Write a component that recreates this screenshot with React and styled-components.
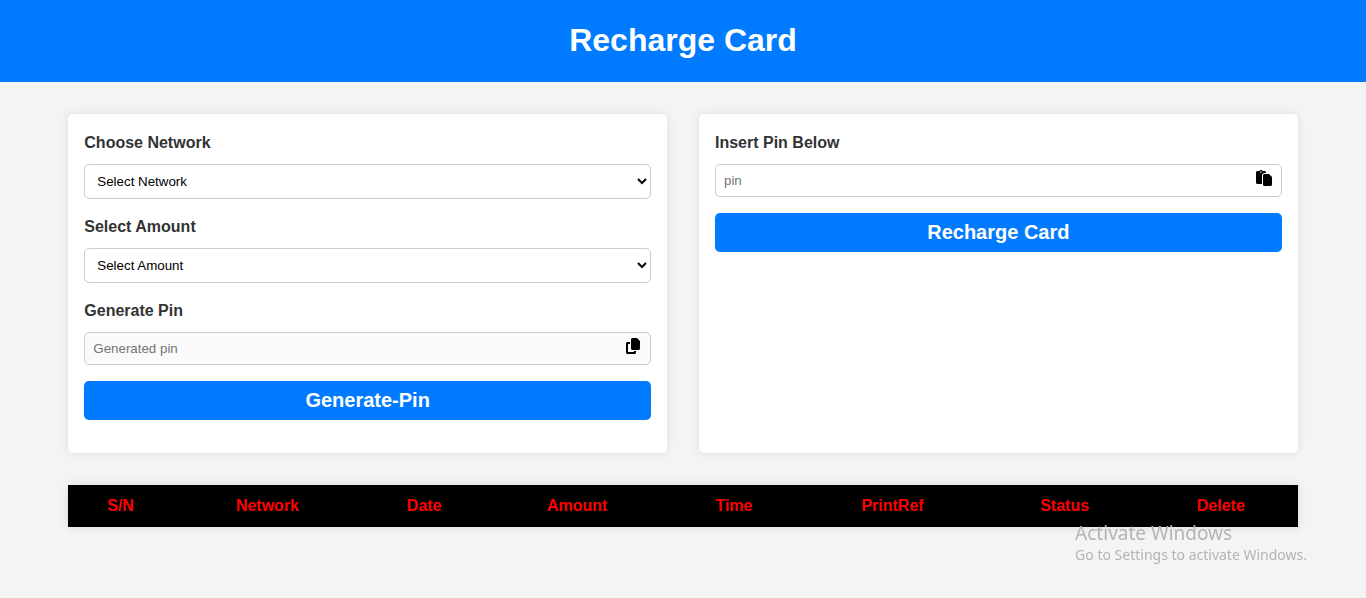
import React from "react";
import styled, { createGlobalStyle } from "styled-components";
import { FaCopy, FaPaste } from "react-icons/fa6";

const GlobalStyle = createGlobalStyle`
  *, *::before, *::after { box-sizing: border-box; }
  body {
    margin: 0;
    background: #f4f4f4;
    color: #333;
    font-family: Arial, "Liberation Sans", sans-serif;
    font-size: 16px;
    line-height: 26px;
  }
`;

const Header = styled.header`
  padding: 16px 16px 18px;
  background: #007bff;
  text-align: center;
`;

const Title = styled.h1`
  margin: 0;
  color: #fff;
  font-size: 32px;
  line-height: 48px;
`;

const Main = styled.main`
  display: grid;
  gap: 32px;
  width: 90%;
  margin: 32px auto;
`;

const Panels = styled.div`
  display: grid;
  grid-template-columns: repeat(2, minmax(0, 1fr));
  gap: 32px;
`;

const Card = styled.form`
  padding: 16px 16px 33px;
  background: #fff;
  border-radius: 5px;
  box-shadow: 0 0 10px rgba(0, 0, 0, 0.1);
`;

const Label = styled.label`
  display: block;
  margin-bottom: 8px;
  font-weight: bold;
  line-height: 26px;
`;

const Select = styled.select`
  display: block;
  width: 100%;
  height: 35px;
  margin-bottom: 15px;
  padding: 8px;
  border: 1px solid #ccc;
  border-radius: 5px;
  background: #fff;
  color: #000;
  font-family: inherit;
`;

const InputWrap = styled.div`
  position: relative;
  margin-bottom: 16px;
`;

const Input = styled.input`
  display: block;
  width: 100%;
  height: 33px;
  padding: 8px 40px 8px 8px;
  border: 1px solid #ccc;
  border-radius: 5px;
  background: ${(p) => (p.readOnly ? "#fafafa" : "#fff")};
  font-family: inherit;

  &::placeholder { color: #757575; }
`;

const IconButton = styled.button`
  position: absolute;
  top: 6px;
  right: 10px;
  display: flex;
  padding: 0;
  border: 0;
  background: none;
  color: #000;
  font-size: 16px;
  cursor: pointer;
`;

const SubmitButton = styled.button`
  display: block;
  width: 100%;
  height: 39px;
  padding: 0 8px;
  border: 0;
  border-radius: 5px;
  background: #007bff;
  color: #fff;
  font-family: inherit;
  font-size: 20px;
  font-weight: bold;
  cursor: pointer;
`;

const Table = styled.table`
  width: 100%;
  table-layout: fixed;
  border-collapse: collapse;
  background: #000;
  box-shadow: 0 0 10px rgba(0, 0, 0, 0.1);
`;

const HeadCell = styled.th`
  width: ${(p) => p.$share}%;
  padding: 8px 0;
  color: #f00;
  text-align: center;
`;

const Watermark = styled.aside`
  position: fixed;
  right: 59px;
  bottom: 32px;
  color: #b4b4b4;
  font-family: "Segoe UI", "Noto Sans", sans-serif;
  font-size: 14px;
  line-height: 22px;
  white-space: nowrap;
  pointer-events: none;
`;

const WatermarkTitle = styled.div`
  font-size: 19px;
`;

const columns = [
  ["S/N", 8.5],
  ["Network", 15.4],
  ["Date", 10.1],
  ["Amount", 14.8],
  ["Time", 10.7],
  ["PrintRef", 15.1],
  ["Status", 12.9],
  ["Delete", 12.5],
];

const networks = ["MTN", "Airtel", "Glo", "9mobile"];
const amounts = ["100", "200", "500", "1000"];

export default function App() {
  return (
    <>
      <GlobalStyle />
      <Header>
        <Title>Recharge Card</Title>
      </Header>
      <Main>
        <Panels>
          <Card>
            <Label htmlFor="network">Choose Network</Label>
            <Select id="network" defaultValue="">
              <option value="">Select Network</option>
              {networks.map((n) => <option key={n}>{n}</option>)}
            </Select>
            <Label htmlFor="amount">Select Amount</Label>
            <Select id="amount" defaultValue="">
              <option value="">Select Amount</option>
              {amounts.map((a) => <option key={a}>{a}</option>)}
            </Select>
            <Label htmlFor="generated">Generate Pin</Label>
            <InputWrap>
              <Input id="generated" type="text" placeholder="Generated pin" readOnly />
              <IconButton type="button" aria-label="Copy pin"><FaCopy /></IconButton>
            </InputWrap>
            <SubmitButton type="button">Generate-Pin</SubmitButton>
          </Card>
          <Card>
            <Label htmlFor="pin">Insert Pin Below</Label>
            <InputWrap>
              <Input id="pin" type="text" placeholder="pin" />
              <IconButton type="button" aria-label="Paste pin"><FaPaste /></IconButton>
            </InputWrap>
            <SubmitButton type="button">Recharge Card</SubmitButton>
          </Card>
        </Panels>
        <Table>
          <thead>
            <tr>
              {columns.map(([name, share]) => (
                <HeadCell key={name} scope="col" $share={share}>{name}</HeadCell>
              ))}
            </tr>
          </thead>
        </Table>
      </Main>
      <Watermark>
        <WatermarkTitle>Activate Windows</WatermarkTitle>
        <div>Go to Settings to activate Windows.</div>
      </Watermark>
    </>
  );
}
